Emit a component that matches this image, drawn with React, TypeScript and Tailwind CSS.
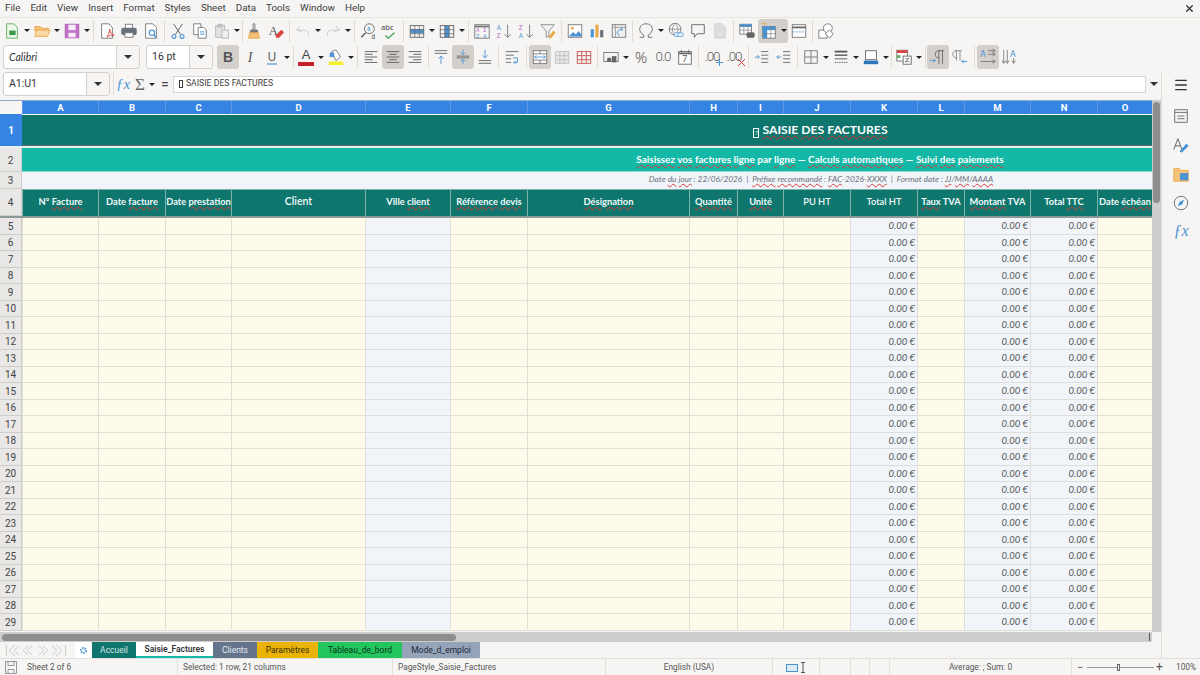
import type { ReactNode } from "react";
import { Menu, X } from "lucide-react";

const B = "#4a94d6";
const G = "#5a5a5a";
const O = "#eaa948";
const R = "#d9433f";

const columns = [
  { key: "A", w: 76, head: <>N° <W>Facture</W></> },
  { key: "B", w: 67, head: <>Date <W>facture</W></> },
  { key: "C", w: 66, head: <>Date <W>prestation</W></> },
  { key: "D", w: 134, head: <span className="text-[10.5px] font-semibold">Client</span> },
  { key: "E", w: 85, head: <>Ville <W>client</W></>, blue: true },
  { key: "F", w: 77, head: <><W>Référence</W> <W>devis</W></> },
  { key: "G", w: 162, head: <W>Désignation</W> },
  { key: "H", w: 48, head: <W>Quantité</W> },
  { key: "I", w: 46, head: <W>Unité</W> },
  { key: "J", w: 67, head: <span className="font-semibold">PU HT</span> },
  { key: "K", w: 67, head: <span className="font-semibold">Total HT</span>, blue: true, money: true },
  { key: "L", w: 47, head: <><W>Taux</W> TVA</> },
  { key: "M", w: 66, head: <><W>Montant</W> TVA</>, blue: true, money: true },
  { key: "N", w: 67, head: <>Total <W>TTC</W></>, blue: true, money: true },
  { key: "O", w: 55, head: <>Date <W>échéan</W></> },
];

const rows = Array.from({ length: 25 }, (_, i) => i + 5);

const menuItems = ["File", "Edit", "View", "Insert", "Format", "Styles", "Sheet", "Data", "Tools", "Window", "Help"];

function W({ children }: { children: ReactNode }) {
  return <span className="underline decoration-wavy decoration-[#d8383a] decoration-1 underline-offset-1">{children}</span>;
}

const Svg = ({ children }: { children: ReactNode }) => (
  <svg width="18" height="18" viewBox="0 0 20 20" fill="none" strokeWidth="1" stroke={G}>
    {children}
  </svg>
);

const Lines = ({ d, c = G }: { d: string; c?: string }) => (
  <Svg>
    <path d={d} stroke={c} />
  </Svg>
);

const TableIcon = ({ c = "#666", fill = "none" }: { c?: string; fill?: string }) => (
  <Svg>
    <rect x="2.5" y="4" width="15" height="13" fill={fill} stroke={c} />
    <path d="M2.5 8.5h15M2.5 13h15M7.5 4v13M12.500 4v13" stroke={c} strokeWidth="1" />
  </Svg>
);

const icons: Record<string, ReactNode> = {
  new: (
    <Svg>
      <path d="M4 2h8l4 4v12H4z" fill="#eef7ec" stroke="#5cae5c" />
      <rect x="7" y="9.500" width="7" height="5" fill="#3a9a4a" stroke="none" />
    </Svg>
  ),
  open: (
    <Svg>
      <path d="M2 5h6l2 2h7v3H2z" fill="#f3c27a" stroke={O} />
      <path d="M2 16l2-7h15l-3 7z" fill="#f9d9a6" stroke={O} />
    </Svg>
  ),
  save: (
    <Svg>
      <path d="M2.500 2.500h15v15h-15z" fill="#c272c8" stroke="#ab55b2" />
      <rect x="6" y="3" width="8" height="6" fill="#f7ecf8" stroke="none" />
      <rect x="6" y="12" width="8" height="5" fill="#f7ecf8" stroke="none" />
    </Svg>
  ),
  pdf: (
    <Svg>
      <path d="M4 2h8l4 4v12H4z" fill="#fff" stroke="#777" />
      <path d="M10 17c2-4 3-6 3-9 0 3 2 6 5 7-3-1-6 0-8 2z" stroke={R} />
    </Svg>
  ),
  print: (
    <Svg>
      <rect x="6" y="2.500" width="8" height="5" fill="#fff" stroke="#777" />
      <rect x="2" y="7" width="16" height="7" rx="1" fill="#66707a" stroke="#66707a" />
      <rect x="5.500" y="12" width="9" height="5" fill="#fff" stroke="#777" />
    </Svg>
  ),
  preview: (
    <Svg>
      <path d="M4 2h8l4 4v12H4z" fill="#fff" stroke="#777" />
      <circle cx="11" cy="12" r="3" stroke={B} strokeWidth="1.300" />
      <path d="M13 14.500l3.500 3" stroke={B} strokeWidth="1.600" />
    </Svg>
  ),
  cut: (
    <Svg>
      <path d="M5 2l8 12M15 2L7 14" stroke="#666" strokeWidth="1.100" />
      <circle cx="5.500" cy="16" r="2.200" stroke={B} strokeWidth="1.200" />
      <circle cx="14.500" cy="16" r="2.200" stroke={B} strokeWidth="1.200" />
    </Svg>
  ),
  copy: (
    <Svg>
      <path d="M3 2h8v12H3z" fill="#fff" stroke="#777" />
      <path d="M8 6h6l3 3v9H8z" fill="#fff" stroke="#777" />
      <path d="M10 11h5M10 13.500h5" stroke={B} />
    </Svg>
  ),
  paste: (
    <Svg>
      <rect x="3" y="4" width="10" height="13" fill="#e2e2e2" stroke="#b5b5b5" />
      <rect x="6" y="2.500" width="4" height="3" fill="#c5c5c5" stroke="#b5b5b5" />
      <rect x="10" y="9" width="7" height="9" fill="#f0f0f0" stroke="#b5b5b5" />
    </Svg>
  ),
  clone: (
    <Svg>
      <path d="M9 2h2v7H9z" stroke="#777" />
      <path d="M6 9h8v3H6z" fill="#777" stroke="#777" />
      <path d="M5 12h10l1 6H4z" fill="#f3c27a" stroke={O} />
    </Svg>
  ),
  clear: (
    <Svg>
      <text x="2" y="14" fontSize="14" fontFamily="Liberation Serif" fill="#555" stroke="none">A</text>
      <path d="M10 15l6-6 2.500 2.500-5 5.500h-3z" fill={R} stroke={R} />
    </Svg>
  ),
  undo: <Lines c="#c8c8c8" d="M3 9l4-5M3 9l6 2M3 9h8c4 0 6 3 5 7" />,
  redo: <Lines c="#c8c8c8" d="M17 9l-4-5M17 9l-6 2M17 9H9c-4 0-6 3-5 7" />,
  find: (
    <Svg>
      <circle cx="11.500" cy="7.500" r="5.500" stroke="#666" />
      <path d="M7.500 12L2.500 17" stroke="#666" strokeWidth="1.800" />
      <text x="9" y="10" fontSize="7" fill={B} stroke="none">a</text>
      <text x="14" y="19" fontSize="7" fill="#444" stroke="none">d</text>
    </Svg>
  ),
  spell: (
    <Svg>
      <text x="0" y="9" fontSize="8.500" fontFamily="Noto Sans" fill="#444" stroke="none">abc</text>
      <path d="M5 15l3 3 7-6" stroke="#3aa655" strokeWidth="1.400" />
    </Svg>
  ),
  rows: (
    <Svg>
      <rect x="2.500" y="8" width="15" height="4.500" fill={B} stroke="none" />
      <rect x="2.500" y="4" width="15" height="13" stroke="#666" />
      <path d="M2.500 8.500h15M2.500 13h15M7.500 4v13M12.500 4v13" stroke="#666" strokeWidth=".8" />
    </Svg>
  ),
  cols: (
    <Svg>
      <rect x="7.500" y="4" width="5" height="13" fill={B} stroke="none" />
      <rect x="2.500" y="4" width="15" height="13" stroke="#666" />
      <path d="M2.500 8.500h15M2.500 13h15M7.500 4v13M12.500 4v13" stroke="#666" strokeWidth=".8" />
    </Svg>
  ),
  sort: (
    <Svg>
      <rect x="2" y="3" width="16" height="15" stroke="#777" />
      <path d="M2 5h16" stroke="#777" strokeWidth="2" />
      <text x="3.500" y="11.500" fontSize="5.500" fill="#c05fc8" stroke="none">A</text>
      <text x="11.500" y="11.500" fontSize="5.500" fill="#c05fc8" stroke="none">Z</text>
      <text x="3.500" y="17.500" fontSize="5.500" fill={B} stroke="none">Z</text>
      <text x="11.500" y="17.500" fontSize="5.500" fill={B} stroke="none">A</text>
    </Svg>
  ),
  asc: (
    <Svg>
      <text x="2" y="8.500" fontSize="7" fill={B} stroke="none">A</text>
      <text x="2" y="18" fontSize="7" fill="#c05fc8" stroke="none">Z</text>
      <path d="M14 3v14M10.500 13.500L14 17l3.500-3.500" stroke="#777" />
    </Svg>
  ),
  desc: (
    <Svg>
      <text x="2" y="8.500" fontSize="7" fill="#c05fc8" stroke="none">Z</text>
      <text x="2" y="18" fontSize="7" fill={B} stroke="none">A</text>
      <path d="M14 3v14M10.500 13.500L14 17l3.500-3.500" stroke="#777" />
    </Svg>
  ),
  filter: (
    <Svg>
      <path d="M2 3h15l-6 7v6l-3 1v-7z" stroke="#888" />
      <path d="M11 17l5-7 2 2-5 6z" fill={O} stroke={O} />
    </Svg>
  ),
  image: (
    <Svg>
      <rect x="2.500" y="3" width="15" height="14" fill="#fff" stroke="#777" />
      <circle cx="7" cy="7" r="1.600" fill={O} stroke="none" />
      <path d="M3 16l5-5 3 3 3-4 3 4v2z" fill={B} stroke="none" />
    </Svg>
  ),
  chart: (
    <Svg>
      <rect x="3" y="8" width="3.500" height="9" fill={B} stroke="none" />
      <rect x="8.200" y="3" width="3.500" height="14" fill={O} stroke="none" />
      <rect x="13.500" y="9" width="3.500" height="8" fill="#66707a" stroke="none" />
    </Svg>
  ),
  pivot: (
    <Svg>
      <rect x="2.500" y="3" width="15" height="14" fill="#f0f0f0" stroke="#777" />
      <path d="M2.500 6h15M6 3v14" stroke="#999" />
      <path d="M8 13c0-3 2-5 6-5M12 6l2 2-2 2M11 15l-3-2" stroke={B} />
    </Svg>
  ),
  omega: <Lines c="#666" d="M3 17h4.500v-2.500C4.500 13 3 10.500 3 8c0-3.500 3-6 7-6s7 2.500 7 6c0 2.500-1.500 5-4.500 6.500V17H17" />,
  link: (
    <Svg>
      <circle cx="9" cy="8" r="6.500" stroke="#777" />
      <path d="M2.500 8h13M9 1.500c-4 4-4 9 0 13M9 1.500c4 4 4 9 0 13" stroke="#777" strokeWidth=".7" />
      <rect x="8" y="12" width="6" height="4" rx="2" fill="#fff" stroke={B} />
      <rect x="12" y="12" width="6" height="4" rx="2" fill="#fff" stroke={B} />
    </Svg>
  ),
  comment: <Lines c="#666" d="M3 3h14v10H9l-3 4v-4H3z" />,
  header: (
    <Svg>
      <path d="M4 2h8l4 4v12H4z" fill="#dedede" stroke="#d2d2d2" />
    </Svg>
  ),
  sheetPrint: (
    <Svg>
      <rect x="2" y="2.500" width="13" height="11" fill="#fff" stroke="#777" />
      <rect x="2" y="2.500" width="13" height="3" fill={B} stroke="none" />
      <path d="M2 9h13M6.500 3v10M11 3v10" stroke="#777" strokeWidth=".7" />
      <rect x="10" y="12" width="8" height="5" rx="1" fill="#666" stroke="#666" />
    </Svg>
  ),
  freeze: (
    <Svg>
      <rect x="3" y="5" width="14" height="13" fill="#fff" stroke="#777" />
      <rect x="3" y="5" width="5" height="13" fill={B} stroke="none" />
      <rect x="3" y="5" width="14" height="4" fill={B} stroke="none" />
      <path d="M3 13h14M12 5v13" stroke="#777" strokeWidth=".7" />
      <path d="M2 2h6M5 1v3" stroke={O} />
    </Svg>
  ),
  split: (
    <Svg>
      <rect x="2.500" y="3" width="15" height="14" fill="#fff" stroke="#777" />
      <path d="M2.500 6h15" stroke="#666" strokeWidth="2" />
      <path d="M3 11h14" stroke={B} strokeDasharray="2 1.500" />
    </Svg>
  ),
  shapes: (
    <Svg>
      <path d="M2 9h9v9H2z" fill="#fff" stroke="#777" />
      <circle cx="12" cy="7" r="5" fill="#fff" stroke="#777" />
      <path d="M9 13l5 5 4-5-4-4z" fill="#fff" stroke="#777" />
    </Svg>
  ),
  italic: <span className="font-['Liberation_Serif'] text-[14px] italic text-[#555]">I</span>,
  bold: <span className="font-['Liberation_Sans'] text-[14px] font-bold text-[#555]">B</span>,
  under: (
    <span className="flex flex-col items-center font-['Noto_Sans'] text-[12px] leading-[13px] text-[#555]">
      U<span className="h-[2px] w-[10px] bg-[#8dbbe3]" />
    </span>
  ),
  fontColor: (
    <span className="flex flex-col items-center font-['Liberation_Sans'] text-[13px] leading-[12px] text-[#444]">
      A<span className="mt-[1px] h-[4px] w-[16px] bg-[#c5222a]" />
    </span>
  ),
  bgColor: (
    <Svg>
      <path d="M5 4l5-2 5 8-5 4z" fill="#fff" stroke="#777" />
      <rect x="3" y="5" width="5" height="5" fill={B} stroke="none" />
      <rect x="2" y="15" width="16" height="4" fill="#f5ee2f" stroke="none" />
    </Svg>
  ),
  left: <Lines d="M3 4h14M3 7h9M3 10h14M3 13h9M3 16h14" />,
  center: <Lines d="M3 4h14M6 7h8M3 10h14M6 13h8M3 16h14" />,
  right: <Lines d="M3 4h14M8 7h9M3 10h14M8 13h9M3 16h14" />,
  top: (
    <Svg>
      <path d="M3 3h14M3 6h14" stroke="#666" />
      <path d="M10 18V9M7 12l3-3 3 3" stroke={B} />
    </Svg>
  ),
  middle: (
    <Svg>
      <path d="M3 9h14M3 11h14" stroke="#666" />
      <path d="M10 2v5M7.500 5l2.500 2.500L12.500 5M10 18v-5M7.500 15l2.500-2.500 2.500 2.500" stroke={B} />
    </Svg>
  ),
  bottom: (
    <Svg>
      <path d="M3 14h14M3 17h14" stroke="#666" />
      <path d="M10 2v9M7 8l3 3 3-3" stroke={B} />
    </Svg>
  ),
  wrap: (
    <Svg>
      <path d="M3 4h14M3 8h9M3 12h6M3 16h6" stroke="#666" />
      <path d="M11 11h5v5h-4M14 14l-2 2 2 2" stroke={B} />
    </Svg>
  ),
  merge: (
    <Svg>
      <rect x="2.500" y="3" width="15" height="14" fill="#fff" stroke="#777" />
      <path d="M2.500 6.500h15M2.500 13.500h15M10 3v3.500M10 13.500V17" stroke="#777" />
      <path d="M4 10h12M4 10l2-2M4 10l2 2M16 10l-2-2M16 10l-2 2" stroke={B} />
    </Svg>
  ),
  mergeOff: <TableIcon c="#c0c0c0" fill="#e8e8e8" />,
  unmerge: <TableIcon c="#c85250" />,
  number: (
    <Svg>
      <rect x="2" y="5" width="16" height="10" stroke="#777" />
      <circle cx="8" cy="13" r="2.500" fill="#666" stroke="none" />
      <rect x="11" y="9" width="5" height="7" fill="#666" stroke="none" />
    </Svg>
  ),
  percent: <span className="font-['Noto_Sans'] text-[15px] font-light text-[#555]">%</span>,
  decimal: <span className="font-['Noto_Sans'] text-[13px] font-light tracking-[-1px] text-[#555]">0.0</span>,
  date: (
    <Svg>
      <rect x="3" y="4" width="14" height="14" fill="#fff" stroke="#666" />
      <path d="M3 6h14" stroke="#666" strokeWidth="2" />
      <path d="M6 2v3M14 2v3" stroke="#666" />
      <text x="7" y="16" fontSize="10" fill="#555" stroke="none">7</text>
    </Svg>
  ),
  addDec: (
    <span className="relative font-['Noto_Sans'] text-[13px] font-light tracking-[-1px] text-[#555]">
      .00
      <svg width="7" height="7" viewBox="0 0 7 7" className="absolute bottom-[1px] right-[-3px]" stroke="#4a94d6">
        <path d="M3.500 0v7M0 3.500h7" />
      </svg>
    </span>
  ),
  delDec: (
    <span className="relative font-['Noto_Sans'] text-[13px] font-light tracking-[-1px] text-[#555]">
      .00
      <svg width="7" height="7" viewBox="0 0 7 7" className="absolute bottom-[1px] right-[-3px]" stroke="#d9433f">
        <path d="M0 0l7 7M7 0L0 7" />
      </svg>
    </span>
  ),
  indent: (
    <Svg>
      <path d="M9 4h8M9 8h8M9 12h8M9 16h8" stroke="#666" />
      <path d="M2 10h5M5 8l2 2-2 2" stroke={B} />
    </Svg>
  ),
  outdent: (
    <Svg>
      <path d="M9 4h8M9 8h8M9 12h8M9 16h8" stroke="#666" />
      <path d="M7 10H2M4 8l-2 2 2 2" stroke={B} />
    </Svg>
  ),
  borders: <Lines c="#777" d="M3 3h14v14H3zM10 3v14M3 10h14" />,
  line: (
    <Svg>
      <path d="M3 4h14" stroke="#555" strokeWidth="2" />
      <path d="M3 8h14" stroke="#555" strokeWidth="1.500" />
      <path d="M3 12h14" stroke="#555" />
      <path d="M3 16h14" stroke="#555" strokeDasharray="1.500 1" />
    </Svg>
  ),
  borderColor: (
    <Svg>
      <rect x="4" y="3" width="12" height="10" fill="#fff" stroke="#666" />
      <rect x="2" y="14" width="16" height="4" fill="#2a77ba" stroke="none" />
    </Svg>
  ),
  cond: (
    <Svg>
      <rect x="2" y="2.500" width="12" height="12" fill="#fff" stroke="#777" />
      <rect x="2" y="2.500" width="12" height="3" fill={R} stroke="none" />
      <rect x="2" y="8" width="4" height="3" fill="#5cae5c" stroke="none" />
      <rect x="9" y="9" width="9" height="9" fill="#fff" stroke="#666" />
      <path d="M11 12h5M11 15h5M15 11l-3 5" stroke="#666" strokeWidth=".8" />
    </Svg>
  ),
  ltr: (
    <Svg>
      <path d="M10 3h7M11 3v15M15 3v15M11 3C8 3 7 5 7 7s1 4 4 4" stroke="#666" />
      <path d="M1 14h6M5 12l2 2-2 2" stroke={B} />
    </Svg>
  ),
  rtl: (
    <Svg>
      <path d="M5 3h7M6 3v11M10 3v11M6 3C3 3 2 5 2 7s1 4 4 4" stroke="#888" />
      <path d="M18 15h-6M14 13l-2 2 2 2" stroke={B} />
    </Svg>
  ),
  horiz: (
    <Svg>
      <text x="1" y="10" fontSize="10" fill={B} stroke="none">A</text>
      <path d="M10 3h8M15 1l3 2-3 2M10 7h8M15 5l3 2-3 2M2 15h16M15 13l3 2-3 2" stroke="#666" strokeWidth=".8" />
    </Svg>
  ),
  vert: (
    <Svg>
      <text x="10" y="10" fontSize="10" fill={B} stroke="none">A</text>
      <path d="M3 2v15M1 14l2 3 2-3M7 2v15M5 14l2 3 2-3M14 11v6M12 14l2 3 2-3" stroke="#666" strokeWidth=".8" />
    </Svg>
  ),
  fx: <span className="font-['Liberation_Serif'] text-[15px] italic text-[#4a94d6]">ƒx</span>,
};

function Btn({ name, active, arrow }: { name: string; active?: boolean; arrow?: boolean }) {
  return (
    <div className={`flex h-[24px] items-center rounded-[3px] ${active ? "bg-[#d3d0cc]" : ""}`}>
      <div className="flex h-[24px] w-[22px] items-center justify-center">{icons[name]}</div>
      {arrow && <Arrow />}
    </div>
  );
}

function Arrow() {
  return (
    <div className="flex w-[8px] justify-center">
      <div className="h-0 w-0 border-x-[3px] border-t-[3px] border-x-transparent border-t-[#222]" />
    </div>
  );
}

function Sep({ w = "w-[5px]" }: { w?: string }) {
  return (
    <div className={`flex h-[22px] justify-center ${w}`}>
      <div className="w-px bg-[#dfdcd8]" />
    </div>
  );
}

function Combo({ text, w, italic }: { text: string; w: string; italic?: boolean }) {
  return (
    <div className={`flex h-[24px] overflow-hidden rounded-[3px] border border-[#d3d0cc] bg-white ${w}`}>
      <div className={`flex-1 pl-[5px] text-[10.5px] leading-[22px] text-[#333] ${italic ? "font-['Lato'] italic" : ""}`}>{text}</div>
      <div className="flex w-[23px] items-center justify-center border-l border-[#d3d0cc] bg-[#f6f5f4]">
        <div className="h-0 w-0 border-x-[4px] border-t-[4px] border-x-transparent border-t-[#333]" />
      </div>
    </div>
  );
}

function SheetGrid() {
  return (
    <div className="flex min-w-0 flex-1 flex-col">
      {/* column letters */}
      <div className="flex h-[14px] border-t border-[#8aa9cf]">
        <div className="w-[22px] shrink-0 bg-[#f6f5f4]" />
        {columns.map((c) => (
          <div
            key={c.key}
            style={{ width: c.w }}
            className="shrink-0 border-l border-[#5a97e0] bg-[#3584e4] text-center text-[9.5px] font-bold leading-[13px] text-white"
          >
            {c.key}
          </div>
        ))}
      </div>

      <div className="flex h-[34px] border-b-2 border-[#e8efef]">
        <div className="flex w-[22px] shrink-0 items-center justify-center bg-[#3584e4] text-[10px] font-bold text-white">1</div>
        <div className="min-w-0 flex-1 overflow-hidden border-t border-white border-b border-b-[#5b6b6b] bg-[#0f766e]">
          <div className="w-[1597px] pt-[6px] text-center font-['Lato'] text-[12.2px] font-bold text-white">
            <span className="mr-[3px] inline-block h-[10px] w-[6px] border border-current text-center align-[-1px] text-[6px] font-normal leading-[8px]">?</span>
            <W>SAISIE</W> <W>DES</W> <W>FACTURES</W>
          </div>
        </div>
      </div>

      <div className="flex h-[24px]">
        <RowHead n={2} />
        <div className="min-w-0 flex-1 overflow-hidden border-b border-[#8adfd4] bg-[#14b8a6]">
          <div className="w-[1596px] pt-[4px] text-center font-['Lato'] text-[10px] font-bold text-white">
            <W>Saisissez</W> <W>vos</W> <W>factures</W> <W>ligne</W> par <W>ligne</W> — <W>Calculs</W> <W>automatiques</W> — <W>Suivi</W> <W>des</W> <W>paiements</W>
          </div>
        </div>
      </div>

      <div className="flex h-[17px]">
        <RowHead n={3} />
        <div className="min-w-0 flex-1 overflow-hidden bg-[#f1f5f9]">
          <div className="w-[1598px] pt-[1px] text-center font-['Lato'] text-[8.3px] italic text-[#6b7280]">
            Date <W>du</W> <W>jour</W> : 22/06/2026 &nbsp;|&nbsp; <W>Préfixe</W> <W>recommandé</W> : <W>FAC</W>-2026-<W>XXXX</W> &nbsp;|&nbsp; Format date : <W>JJ</W>/<W>MM</W>/<W>AAAA</W>
          </div>
        </div>
      </div>

      <div className="flex h-[29px] border-b-2 border-[#8b9a98]">
        <RowHead n={4} />
        {columns.map((c) => (
          <div
            key={c.key}
            style={{ width: c.w }}
            className="flex shrink-0 items-center justify-center overflow-hidden whitespace-nowrap border-l border-t border-[#7fb3ad] bg-[#0f766e] pb-[2px] font-['Lato'] text-[9.3px] font-bold text-[#f2fbfa]"
          >
            <span>{c.head}</span>
          </div>
        ))}
      </div>

      {rows.map((n) => (
        <div key={n} className="flex h-[16.5px]">
          <RowHead n={n} />
          {columns.map((c) => (
            <div
              key={c.key}
              style={{ width: c.w }}
              className={`shrink-0 border-b border-l border-[#dfdfd9] pr-[2px] pt-[1px] text-right font-['Lato'] text-[9.5px] italic leading-[14px] text-[#555] ${c.blue ? "bg-[#f1f5f9]" : "bg-[#fffbeb]"}`}
            >
              {c.money ? "0.00 €" : ""}
            </div>
          ))}
        </div>
      ))}
    </div>
  );
}

function RowHead({ n }: { n: number }) {
  return (
    <div className="flex w-[22px] shrink-0 items-center justify-center border-b border-r border-[#cfcdc9] bg-[#e9e8e6] pt-[1px] text-[10px] text-[#444]">
      {n}
    </div>
  );
}

function Tab({ label, className }: { label: string; className: string }) {
  return <div className={`flex h-[16px] items-center justify-center text-[8.5px] ${className}`}>{label}</div>;
}

function StatusCell({ w, children, center }: { w: string; children?: ReactNode; center?: boolean }) {
  return (
    <div className={`flex h-full items-center border-r border-[#e2e0dd] ${w} ${center ? "justify-center" : "pl-[5px]"}`}>
      {children}
    </div>
  );
}

export default function App() {
  return (
    <div className="flex h-[675px] w-[1200px] flex-col overflow-hidden bg-[#f6f5f4] font-['Roboto',sans-serif] text-[#3d3d3d]">
      {/* menu bar */}
      <div className="flex h-[17px] items-center pl-[5px] text-[9.8px]">
        <div className="flex flex-1 gap-[10px]">
          {menuItems.map((m) => (
            <span key={m}>{m}</span>
          ))}
        </div>
        <X size={11} strokeWidth={3} className="mr-[5px] text-[#333]" />
      </div>

      {/* standard toolbar */}
      <div className="flex h-[27px] items-center border-t border-[#e8e6e3] pb-[1px] pl-[1px]">
        <Btn name="new" arrow />
        <Btn name="open" arrow />
        <Btn name="save" arrow />
        <Sep />
        <Btn name="pdf" />
        <Btn name="print" />
        <Btn name="preview" />
        <Sep />
        <Btn name="cut" />
        <Btn name="copy" />
        <Btn name="paste" arrow />
        <Sep w="w-[2px]" />
        <Btn name="clone" />
        <Btn name="clear" />
        <Sep />
        <Btn name="undo" arrow />
        <Btn name="redo" arrow />
        <Sep />
        <Btn name="find" />
        <Btn name="spell" />
        <Sep />
        <Btn name="rows" arrow />
        <Btn name="cols" arrow />
        <Sep />
        <Btn name="sort" />
        <Btn name="asc" />
        <Btn name="desc" />
        <Btn name="filter" />
        <Sep />
        <Btn name="image" />
        <Btn name="chart" />
        <Btn name="pivot" />
        <Sep />
        <Btn name="omega" arrow />
        <Btn name="link" />
        <Btn name="comment" />
        <Btn name="header" />
        <Sep />
        <Btn name="sheetPrint" />
        <Btn name="freeze" active arrow />
        <Btn name="split" />
        <Sep />
        <Btn name="shapes" />
      </div>

      {/* formatting toolbar */}
      <div className="flex h-[27px] items-center gap-0 pb-[1px] pl-[3px]">
        <Combo text="Calibri" w="w-[137px]" italic />
        <div className="w-[6px]" />
        <Combo text="16 pt" w="w-[67px]" />
        <div className="w-[4px]" />
        <Btn name="bold" active />
        <Btn name="italic" />
        <Btn name="under" arrow />
        <Sep w="w-[4px]" />
        <Btn name="fontColor" arrow />
        <Btn name="bgColor" arrow />
        <Sep />
        <Btn name="left" />
        <Btn name="center" active />
        <Btn name="right" />
        <Sep w="w-[4px]" />
        <Btn name="top" />
        <Btn name="middle" active />
        <Btn name="bottom" />
        <Sep />
        <Btn name="wrap" />
        <Sep w="w-[6px]" />
        <Btn name="merge" active />
        <Btn name="mergeOff" />
        <Btn name="unmerge" />
        <Sep />
        <Btn name="number" arrow />
        <Btn name="percent" />
        <Btn name="decimal" />
        <Btn name="date" />
        <Sep />
        <Btn name="addDec" />
        <Btn name="delDec" />
        <Sep w="w-[6px]" />
        <Btn name="indent" />
        <Btn name="outdent" />
        <Sep />
        <Btn name="borders" arrow />
        <Btn name="line" arrow />
        <Btn name="borderColor" arrow />
        <Sep w="w-[3px]" />
        <Btn name="cond" arrow />
        <Sep w="w-[4px]" />
        <Btn name="ltr" active />
        <Btn name="rtl" />
        <Sep w="w-[6px]" />
        <Btn name="horiz" active />
        <Btn name="vert" />
      </div>

      <div className="flex min-h-0 flex-1">
        <div className="flex min-w-0 flex-1 flex-col">
          {/* formula bar */}
          <div className="flex h-[29px] items-center pb-[3px] pl-[3px]">
            <Combo text="A1:U1" w="w-[107px]" />
            <div className="ml-[3px] mr-[1px] h-[22px] w-px bg-[#dfdcd8]" />
            <div className="flex w-[16px] justify-center">{icons.fx}</div>
            <span className="ml-[4px] font-['Liberation_Serif'] text-[17px] leading-none text-[#666]">Σ</span>
            <div className="ml-[3px]"><Arrow /></div>
            <span className="ml-[3px] w-[12px] text-center text-[14px] leading-none text-[#444]">=</span>
            <div className="ml-[2px] flex h-[17px] flex-1 items-center border border-[#d8d6d2] bg-white pl-[5px] text-[8.7px]">
              <span className="mr-[3px] inline-block h-[8px] w-[4px] border border-current" />
              SAISIE DES FACTURES
            </div>
            <div className="flex w-[15px] justify-center">
              <div className="h-0 w-0 border-x-[4px] border-t-[4px] border-x-transparent border-t-[#333]" />
            </div>
          </div>

          <div className="flex min-h-0 flex-1">
            <SheetGrid />
            {/* vertical scrollbar */}
            <div className="w-[9px] shrink-0 bg-[#cdcdcd] px-[1px] pt-[2px]">
              <div className="h-[101px] w-[7px] rounded-full bg-[#8e8e8e]" />
            </div>
          </div>

          {/* horizontal scrollbar */}
          <div className="flex h-[10px] shrink-0 pr-[9px]">
            <div className="flex flex-1 items-center bg-[#cdcdcd] pl-[2px] pr-[2px]">
              <div className="h-[7px] w-[454px] rounded-full bg-[#8e8e8e]" />
              <div className="ml-auto h-[8px] w-px bg-[#555]" />
            </div>
          </div>

          {/* sheet tabs */}
          <div className="flex h-[16px] shrink-0 items-center pl-[6px]">
            <svg width="60" height="13" viewBox="0 0 60 13" fill="none" stroke="#cfcdca" className="mr-[9px]">
              <path d="M.5 1v11M9 1L3 6.500 9 12M13 2L8 6.500 13 11M22 2l-5 4.500 5 4.500M26 2l-5 4.500 5 4.500M33 2l5 4.500-5 4.500M37 2l5 4.500-5 4.500M46 2l5 4.500-5 4.500M50 1l6 5.500-6 5.500M59.500 1v11" />
            </svg>
            <div className="mr-[1px] flex h-[16px] w-[16px] items-center justify-center bg-white">
              <svg width="9" height="9" viewBox="0 0 9 9">
                <circle cx="4.500" cy="4.500" r="2.500" fill="none" stroke="#4a94d6" strokeWidth="2" strokeDasharray="1.500 1" />
              </svg>
            </div>
            <Tab label="Accueil" className="w-[44px] bg-[#0f766e] text-[#cfe5e2]" />
            <Tab label="Saisie_Factures" className="w-[77px] border-b-2 border-[#14b8a6] bg-white font-semibold text-[#333]" />
            <Tab label="Clients" className="w-[44px] bg-[#64748b] text-[#e2e8f0]" />
            <Tab label="Paramètres" className="w-[61px] bg-[#eab308] text-[#3a3000]" />
            <Tab label="Tableau_de_bord" className="w-[84px] bg-[#22c55e] text-[#06371a]" />
            <Tab label="Mode_d_emploi" className="w-[78px] bg-[#94a3b8] text-[#1e293b]" />
          </div>
        </div>

        {/* sidebar */}
        <div className="flex w-[39px] shrink-0 flex-col items-center gap-[11px] border-l border-[#dedcd8] pt-[6px]">
          <Menu size={16} className="mb-[3px] text-[#333]" />
          <Lines c="#666" d="M3 3h14v14H3zM3 6h14M6 10h8M6 13h8" />
          <Svg>
            <path d="M2 15L6.500 3 11 15M3.500 11h6" stroke="#555" />
            <path d="M9 17l7-8 2 2-7 7z" fill={B} stroke={B} />
          </Svg>
          <Svg>
            <path d="M2 4h6l2 2h8v12H2z" fill="#f3c27a" stroke={O} />
            <rect x="9" y="9" width="9" height="8" fill={B} stroke="none" />
          </Svg>
          <Svg>
            <circle cx="10" cy="10" r="7.500" stroke="#666" />
            <path d="M13.500 6.500L11.500 11.500 6.500 13.500 8.500 8.500z" fill={B} stroke="none" />
          </Svg>
          <span className="font-['Liberation_Serif'] text-[16px] italic leading-none text-[#4a94d6]">ƒx</span>
        </div>
      </div>

      {/* status bar */}
      <div className="flex h-[17px] shrink-0 items-center border-t border-[#e2e0dd] text-[8.3px] text-[#555]">
        <StatusCell w="w-[178px]">
          <svg width="12" height="13" viewBox="0 0 12 13" fill="none" stroke="#999" className="mr-[10px]">
            <path d="M.5.500h11v12H.5zM3 .500v4h6v-4M3 12.500v-4h6v4" />
          </svg>
          Sheet 2 of 6
        </StatusCell>
        <StatusCell w="w-[215px]">Selected: 1 row, 21 columns</StatusCell>
        <StatusCell w="w-[213px]">PageStyle_Saisie_Factures</StatusCell>
        <StatusCell w="w-[167px]" center>English (USA)</StatusCell>
        <StatusCell w="w-[47px]" center>
          <svg width="20" height="11" viewBox="0 0 20 11" fill="none">
            <rect x=".5" y="2.500" width="11" height="7" fill="#dcebf7" stroke="#4a94d6" />
            <path d="M15 .500h4M17 .500v10M15 10.500h4" stroke="#555" />
          </svg>
        </StatusCell>
        <StatusCell w="w-[31px]" />
        <StatusCell w="w-[19px]" />
        <StatusCell w="w-[20px]" />
        <StatusCell w="w-[182px]" center>Average: ; Sum: 0</StatusCell>
        <div className="flex flex-1 items-center pl-[5px]">
          <span className="w-[7px] text-[11px] leading-none">−</span>
          <div className="relative ml-[3px] h-px w-[67px] bg-[#999]">
            <div className="absolute left-[30px] top-[-3px] h-[7px] w-[3px] border border-[#666] bg-[#f6f5f4]" />
          </div>
          <span className="ml-[2px] w-[8px] text-[12px] leading-none">+</span>
          <span className="ml-[12px]">100%</span>
        </div>
      </div>
    </div>
  );
}
